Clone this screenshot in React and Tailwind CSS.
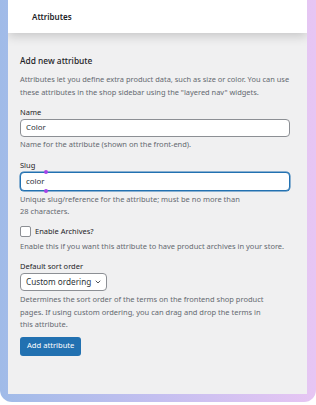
import { ChevronDown } from "lucide-react";

function App() {
  return (
    <div className="w-[316px] h-[405px] bg-white font-['Noto_Sans',sans-serif]">
      <div className="h-[402px] rounded-b-[12px] bg-gradient-to-r from-[#a0bbe8] via-[#c4bff0] to-[#e7c5f3] pl-[8px] pr-[9px] pb-[8px]">
        <div className="h-full flex flex-col bg-[#f0f0f1] overflow-hidden">
          <div className="h-[33px] shrink-0 bg-white flex items-center pl-[24px] shadow-[0_3px_10px_rgba(0,0,0,0.18)] relative z-10">
            <span className="text-[8px] font-semibold text-[#1d2327]">Attributes</span>
          </div>

          <div className="px-[12px] pt-[22px] flex flex-col items-start">
            <h2 className="text-[8.4px] leading-[12px] font-medium text-[#1d2327]">Add new attribute</h2>
            <p className="mt-[6px] text-[7.45px] leading-[12.5px] text-[#646970] whitespace-nowrap">
              Attributes let you define extra product data, such as size or color. You can use
              <br />
              these attributes in the shop sidebar using the "layered nav" widgets.
            </p>

            <label className="mt-[9px] text-[7.5px] leading-[11px] text-[#1d2327]">Name</label>
            <div className="mt-[1px] w-[270px] h-[18px] bg-white border border-[#8c8f94] rounded-[4px] flex items-center px-[5px] text-[7.9px] text-[#2c3338]">
              Color
            </div>
            <p className="mt-[1px] text-[7.5px] leading-[12px] text-[#646970]">
              Name for the attribute (shown on the front-end).
            </p>

            <label className="mt-[10px] text-[7.5px] leading-[11px] text-[#1d2327]">Slug</label>
            <div className="relative mt-[1px] w-[270px] h-[19px] bg-white border border-[#2271b1] shadow-[0_0_0_0.5px_#2271b1] rounded-[4px] flex items-center px-[5px] text-[7.9px] text-[#2c3338]">
              color
              <span className="absolute left-[23px] -top-[3px] w-[4px] h-[4px] rounded-full bg-[#a742e8]" />
              <span className="absolute left-[23px] -bottom-[3px] w-[4px] h-[4px] rounded-full bg-[#a742e8]" />
            </div>
            <p className="mt-[2px] text-[7.5px] leading-[12px] text-[#646970] whitespace-nowrap">
              Unique slug/reference for the attribute; must be no more than
              <br />
              28 characters.
            </p>

            <div className="mt-[9px] h-[11px] flex items-center gap-[4px]">
              <span className="w-[11px] h-[11px] bg-white border border-[#8c8f94] rounded-[2px]" />
              <span className="text-[7.5px] text-[#1d2327]">Enable Archives?</span>
            </div>
            <p className="mt-[3px] text-[7.5px] leading-[12px] text-[#646970] whitespace-nowrap">
              Enable this if you want this attribute to have product archives in your store.
            </p>

            <label className="mt-[9px] text-[7.5px] leading-[11px] text-[#1d2327]">Default sort order</label>
            <div className="mt-[1px] w-[87px] h-[18px] bg-white border border-[#8c8f94] rounded-[4px] flex items-center justify-between pl-[5px] pr-[4px] text-[8.2px] text-[#2c3338]">
              <span>Custom ordering</span>
              <ChevronDown size={8} strokeWidth={2.5} />
            </div>
            <p className="mt-[2px] text-[7.5px] leading-[12.5px] text-[#646970] whitespace-nowrap">
              Determines the sort order of the terms on the frontend shop product
              <br />
              pages. If using custom ordering, you can drag and drop the terms in
              <br />
              this attribute.
            </p>

            <button className="mt-[6px] h-[19px] px-[7px] bg-[#2271b1] rounded-[3px] text-white text-[7.6px] leading-none">
              Add attribute
            </button>
          </div>
        </div>
      </div>
    </div>
  );
}

export default App;
